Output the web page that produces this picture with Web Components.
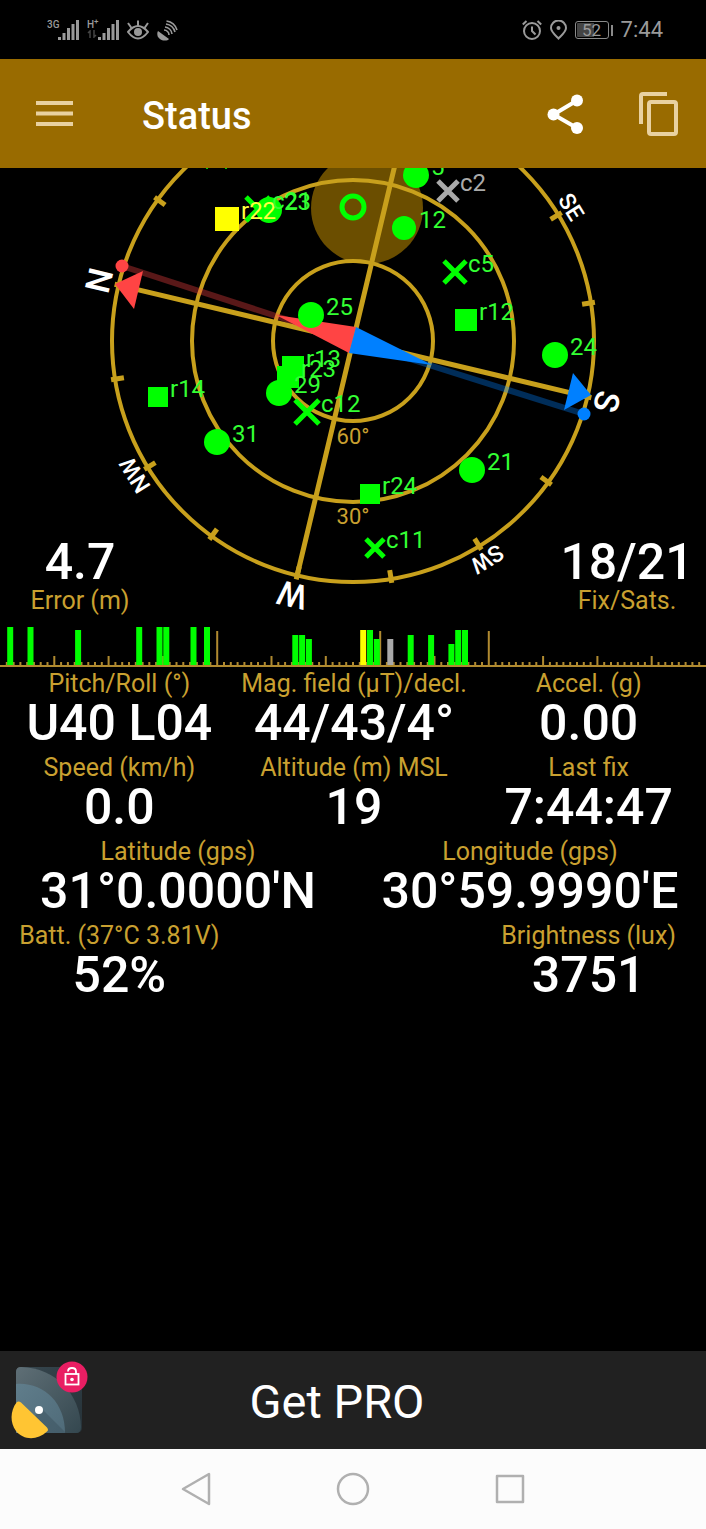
<!DOCTYPE html>
<html lang="en">
<head>
<meta charset="utf-8">
<meta name="viewport" content="width=device-width, initial-scale=1">
<title>Status</title>
<style>
  body {
    margin: 0;
    background: #000;
    color: #fff;
    font-family: Roboto, "Liberation Sans", sans-serif;
    --gold: #c8a01c;
    --gold-text: #c9a030;
    --bar: #996b00;
  }
</style>
</head>
<body>
<gps-status-app></gps-status-app>

<script>
// Small helper so every component builds its shadow root the same way
class BaseElement extends HTMLElement {
  connectedCallback() {
    if (!this.shadowRoot) this.attachShadow({ mode: 'open' });
    this.shadowRoot.innerHTML = this.render();
  }
}

class StatusBar extends BaseElement {
  render() {
    return `
      <style>
        :host {
          display: flex;
          justify-content: space-between;
          align-items: center;
          height: 59px;
          padding: 1px 43px 0 47px;
          box-sizing: border-box;
          color: #9a9a9a;
        }
        .group { display: flex; align-items: center; gap: 8px; }
        .signal { display: flex; height: 20px; }
        .net { font-size: 10px; line-height: 10px; font-weight: 500; width: 11px; white-space: nowrap; }
        .clock { font-size: 22px; line-height: 24px; }
        .battery { display: flex; align-items: center; gap: 2px; }
        .cell {
          width: 34px; height: 18px; box-sizing: border-box;
          border: 1px solid #8a8a8a; border-radius: 3px;
          background: linear-gradient(90deg, #444 0 17px, #000 17px) content-box;
          padding: 1px;
          font-size: 17px; line-height: 14px; text-align: center;
        }
        .cap { width: 2px; height: 11px; background: #8a8a8a; }
        svg { display: block; }
      </style>
      <div class="group">
        <div class="signal">
          <span class="net">3G</span>
          <svg width="21" height="20" fill="currentColor"><path d="M0 17h3v3H0zM4.500 13h3v7h-3zM9 8h3v12H9zM13.500 4h3v16h-3zM18 0h3v20h-3z"/></svg>
        </div>
        <div class="signal">
          <span class="net">H<sup style="line-height:0;font-size:8px">+</sup>
            <svg width="10" height="8" fill="none" stroke="#444" stroke-width="1.500"><path d="M1 3l2-2v7M7 0v7l2-2"/></svg>
          </span>
          <svg width="21" height="20" fill="currentColor"><path d="M0 17h3v3H0zM4.500 13h3v7h-3zM9 8h3v12H9zM13.500 4h3v16h-3zM18 0h3v20h-3z"/></svg>
        </div>
        <svg width="22" height="20" viewBox="0 0 22 20" fill="none" stroke="currentColor" stroke-width="2">
          <path d="M1 12Q11 0 21 12Q11 25 1 12z"/><circle cx="11" cy="12" r="4" fill="currentColor" stroke="none"/>
          <path d="M11 6V.5M4.500 8L1 3M17.500 8L21 3"/>
        </svg>
        <svg width="21" height="21" viewBox="0 0 21 21" fill="none" stroke="currentColor" stroke-width="1.600">
          <path d="M1 11C-1 14 1 20.500 8 20.500c2 0 3-.5 4-1.500z" fill="currentColor" stroke="none"/>
          <path d="M7 10a5 5 0 0 1 5 5M8 7a8 8 0 0 1 7 7M9 4a11 11 0 0 1 9 8M9.500 1A13 13 0 0 1 20 10"/>
        </svg>
      </div>
      <div class="group">
        <svg width="20" height="20" viewBox="0 0 20 20" fill="none" stroke="currentColor" stroke-width="2">
          <circle cx="10" cy="11" r="8"/><path d="M10 6.500V11l3.500 3.500M.8 4.500L4.500 1M19.200 4.500L15.500 1"/>
        </svg>
        <svg width="17" height="20" viewBox="0 0 17 20" fill="none" stroke="currentColor" stroke-width="2">
          <path d="M8.500 18.500C4 14 1 11.500 1 8a7.500 7.500 0 0 1 15 0c0 3.500-3 6-7.500 10.500z"/><circle cx="8.500" cy="8" r="2" fill="currentColor" stroke="none"/>
        </svg>
        <div class="battery"><div class="cell">52</div><div class="cap"></div></div>
        <span class="clock">7:44</span>
      </div>
    `;
  }
}
customElements.define('status-bar', StatusBar);

class AppBar extends BaseElement {
  render() {
    return `
      <style>
        :host {
          display: flex;
          align-items: center;
          height: 109px;
          padding: 0 25px 0 34px;
          box-sizing: border-box;
          background: var(--bar);
        }
        button { border: 0; padding: 0; background: none; color: #e9d1a0; display: block; }
        button svg { display: block; }
        h1 { flex: 1; margin: 0 0 0 66px; padding-top: 4px; font-size: 38px; line-height: 44px; font-weight: 500; }
        .share { color: #fff; margin-right: 53px; }
      </style>
      <button aria-label="Menu">
        <svg width="42" height="32" fill="currentColor"><path d="M2 3h37v4H2zM2 13.500h37v4H2zM2 24h37v4H2z"/></svg>
      </button>
      <h1><slot></slot></h1>
      <button class="share" aria-label="Share">
        <svg width="42" height="42" viewBox="0 0 42 42" fill="currentColor">
          <path d="M33 7.500L9.500 21.500 33 35" fill="none" stroke="currentColor" stroke-width="4"/>
          <circle cx="33" cy="7.500" r="6"/><circle cx="9.500" cy="21.500" r="6"/><circle cx="33" cy="35" r="6"/>
        </svg>
      </button>
      <button aria-label="Copy">
        <svg width="42" height="46" viewBox="0 0 42 46" fill="none" stroke="currentColor" stroke-width="4">
          <path d="M2 33V5q0-2 2-2h24"/><rect x="10" y="11" width="27" height="32" rx="2"/>
        </svg>
      </button>
    `;
  }
}
customElements.define('app-bar', AppBar);

// type: circle (gps), square (glonass), cross (beidou)
const SATS = [
  { type: 'square', x: 227, y: 219, r: 12, label: 'r22', color: '#ff0', text: '#ffff40' },
  { type: 'circle', x: 269, y: 210, r: 13, label: '23' },
  { type: 'cross', x: 258, y: 209, r: 12, label: 'c21' },
  { type: 'circle', x: 311, y: 315, r: 13, label: '25' },
  { type: 'cross', x: 448, y: 191, r: 10, label: 'c2', color: '#aaa', text: '#aaa' },
  { type: 'circle', x: 416, y: 175, r: 13, label: '5' },
  { type: 'circle', x: 404, y: 228, r: 12, label: '12' },
  { type: 'cross', x: 455, y: 272, r: 11, label: 'c5' },
  { type: 'square', x: 466, y: 320, r: 11, label: 'r12' },
  { type: 'circle', x: 555, y: 355, r: 13, label: '24' },
  { type: 'square', x: 293, y: 367, r: 11, label: 'r13' },
  { type: 'square', x: 288, y: 377, r: 11, label: 'r23' },
  { type: 'circle', x: 279, y: 393, r: 13, label: '29' },
  { type: 'cross', x: 307, y: 412, r: 12, label: 'c12' },
  { type: 'circle', x: 217, y: 442, r: 13, label: '31' },
  { type: 'square', x: 158, y: 397, r: 10, label: 'r14' },
  { type: 'circle', x: 472, y: 470, r: 13, label: '21' },
  { type: 'square', x: 370, y: 494, r: 10, label: 'r24' },
  { type: 'cross', x: 375, y: 548, r: 9, label: 'c11' }
];

class SkyView extends BaseElement {
  constructor() {
    super();
    this._cx = 353;
    this._cy = 341;
    this._heading = -76.6; // screen angle of north
  }

  _ticks() {
    let out = '';
    for (let i = 0; i < 16; i++) {
      out += `<path d="M0-232V-245" transform="rotate(${this._heading + i * 22.5})"/>`;
    }
    return out;
  }

  _letters() {
    return ['N', '', 'E', 'SE', 'S', 'SW', 'W', 'NW'].map((name, i) => {
      const size = name.length > 1 ? 23 : 34;
      const radius = name.length > 1 ? 248 : 249;
      return name ? `<text y="${-radius}" font-size="${size}" transform="rotate(${this._heading + i * 45})">${name}</text>` : '';
    }).join('');
  }

  _sat({ type, x, y, r, color = '#0f0' }) {
    if (type === 'circle') return `<circle cx="${x}" cy="${y}" r="${r}" fill="${color}"/>`;
    if (type === 'square') return `<rect x="${x - r}" y="${y - r}" width="${2 * r}" height="${2 * r}" fill="${color}"/>`;
    return `<path d="M${x - r} ${y - r}l${2 * r} ${2 * r}m0 ${-2 * r}l${-2 * r} ${2 * r}" stroke="${color}" stroke-width="5"/>`;
  }

  _satLabel({ x, y, r, type, label, text = '#33ff33' }) {
    const dx = type === 'circle' ? 15 : r + 2;
    return `<text x="${x + dx}" y="${y}" fill="${text}">${label}</text>`;
  }

  render() {
    return `
      <style>
        :host { display: grid; }
        svg { grid-area: 1 / 1; display: block; width: 100%; overflow: hidden; }
        .corners {
          grid-area: 1 / 1;
          align-self: end;
          display: flex;
          justify-content: space-between;
          padding: 0 0 11px 1px;
        }
        .corners ::slotted(*) { width: 158px; }
      </style>
      <svg viewBox="0 168 706 458" font-family="Roboto, sans-serif">
        <circle cx="367" cy="208" r="56" fill="#6b4e00"/>
        <g fill="none" stroke="var(--gold)" stroke-width="4" transform="translate(${this._cx} ${this._cy})">
          <circle r="80"/><circle r="161"/><circle r="241"/>
          <g stroke-width="5">
            <path d="M0-241V241M-241 0H241" transform="rotate(${this._heading})"/>
            ${this._ticks()}
          </g>
        </g>
        <g fill="#fff" font-weight="500" text-anchor="middle" transform="translate(${this._cx} ${this._cy})">
          ${this._letters()}
        </g>
        <g fill="#c9a030" font-size="22" text-anchor="middle">
          <text x="353" y="444">60°</text><text x="353" y="524">30°</text>
        </g>
        <path d="M122 266L353 341" stroke="#ff4444" stroke-opacity=".35" stroke-width="6"/>
        <path d="M584 414L353 341" stroke="#0080ff" stroke-opacity=".35" stroke-width="6"/>
        <path d="M276 315L356 327 349 353z" fill="#ff4444"/>
        <path d="M432 365L356 327 349 353z" fill="#0080ff"/>
        <circle cx="122" cy="266" r="6.500" fill="#ff4444"/><circle cx="584" cy="414" r="6.500" fill="#0080ff"/>
        <path d="M115 284l28-13-9 38z" fill="#ff4444"/>
        <path d="M591 395l-18-22-9 37z" fill="#0080ff"/>
        <circle cx="353" cy="207" r="11" fill="none" stroke="#0f0" stroke-width="5"/>
        ${SATS.map(this._sat).join('')}
        <path d="M206 168h2v1h-2zM225 168h2v1h-2z" fill="#0c0"/>
        <g font-size="24">${SATS.map(this._satLabel).join('')}</g>
      </svg>
      <div class="corners"><slot></slot></div>
    `;
  }
}
customElements.define('sky-view', SkyView);

// slot = position on the scale, each slot is 1/104 of the width
const SIGNALS = [
  [1, 39], [4, 39], [11, 36], [20, 39], [23, 39], [24, 39], [28, 39], [30, 39],
  [43, 31], [44, 31], [45, 27],
  [53, 36, '#ff0'], [54, 36], [55, 27], [57, 27, '#aaa'],
  [60, 31], [63, 31], [66, 22], [67, 36], [68, 36]
];

class SignalBars extends BaseElement {
  render() {
    const step = 706 / 104;
    let ticks = '';
    for (let i = 1; i < 104; i++) {
      const h = [32, 56, 72].includes(i) ? 35 : i % 8 === 0 ? 10 : 4;
      ticks += `M${(i * step).toFixed(1)} 40v${-h}`;
    }
    const bars = SIGNALS.map(([pos, h, color = '#0f0']) =>
      `<rect x="${((pos + 0.5) * step - 3).toFixed(1)}" y="${40 - h}" width="6" height="${h}" fill="${color}"/>`).join('');
    return `
      <style>
        :host { display: block; }
        svg { display: block; width: 100%; }
      </style>
      <svg viewBox="0 0 706 42">
        <path d="${ticks}" stroke="#b08a30" stroke-width="2"/>
        ${bars}
        <path d="M0 40H706" stroke="#b08a30" stroke-width="2"/>
      </svg>
    `;
  }
}
customElements.define('signal-bars', SignalBars);

// <value-readout label="Speed (km/h)">0.0</value-readout>
// add the "flip" attribute to put the label under the value
class ValueReadout extends BaseElement {
  render() {
    return `
      <style>
        :host { display: flex; flex-direction: column; text-align: center; white-space: nowrap; }
        :host([flip]) { flex-direction: column-reverse; }
        .label { font-size: 25px; line-height: 28px; color: var(--gold-text); }
        .value { font-size: 50px; line-height: 50px; font-weight: 500; color: #fff; }
      </style>
      <div class="label">${this.getAttribute('label')}</div>
      <div class="value"><slot></slot></div>
    `;
  }
}
customElements.define('value-readout', ValueReadout);

class ProBanner extends BaseElement {
  render() {
    return `
      <style>
        :host { display: block; background: #212121; }
        button {
          display: grid;
          grid-template-columns: 90px 1fr 122px;
          align-items: center;
          width: 100%;
          height: 98px;
          border: 0;
          padding: 0;
          background: none;
          color: #fff;
          font: 400 47px/56px Roboto, sans-serif;
          text-align: center;
        }
        span { padding-top: 4px; }
        svg { display: block; }
      </style>
      <button>
        <svg width="90" height="98" viewBox="0 0 90 98">
          <defs>
            <linearGradient id="back" x1="0" y1="0" x2="1" y2="1"><stop offset="0" stop-color="#37474f"/><stop offset="1" stop-color="#263238"/></linearGradient>
            <linearGradient id="mid" x1="0" y1="0" x2="1" y2="1"><stop offset="0" stop-color="#5f6f76"/><stop offset="1" stop-color="#34474f"/></linearGradient>
            <linearGradient id="front" x1="0" y1="0" x2="1" y2="1"><stop offset="0" stop-color="#607d8b"/><stop offset="1" stop-color="#4f6b79"/></linearGradient>
          </defs>
          <rect x="16" y="16" width="66" height="66" rx="5" fill="url(#back)"/>
          <path d="M16 21q0-5 5-5c35 1 59 27 60 60q0 6-5 6H16z" fill="url(#mid)"/>
          <path d="M16 33c27-2 49 18 49 49H16z" fill="url(#front)"/>
          <path d="M41 57l24 24v1H46L35 65z" fill="#3c525d" opacity=".5"/>
          <path d="M16.500 51.500q2-2 4.500 0L47 76.500q2 2.500 0 4C37 90 23 89 16 80c-6-8-6-20 .5-28.500z" fill="#ffc533"/>
          <circle cx="39" cy="59" r="4" fill="#fff"/>
          <circle cx="72" cy="26" r="15.500" fill="#e91e63"/>
          <g fill="none" stroke="#fff" stroke-width="1.800"><rect x="65.500" y="23" width="13" height="10.500"/><path d="M68 20.500q0-3.500 4-3.500t4 3.500V23"/></g>
          <circle cx="72" cy="28.500" r="1.800" fill="#fff"/>
        </svg>
        <span><slot></slot></span>
      </button>
    `;
  }
}
customElements.define('pro-banner', ProBanner);

class NavBar extends BaseElement {
  render() {
    return `
      <style>
        :host {
          display: flex;
          justify-content: center;
          align-items: center;
          gap: 121px;
          height: 80px;
          background: #fcfcfc;
        }
        button { border: 0; padding: 0; background: none; color: #b0b0b0; }
        svg { display: block; fill: none; stroke: currentColor; stroke-width: 2.5; stroke-linejoin: round; }
      </style>
      <button aria-label="Back"><svg width="36" height="36"><path d="M31 3v30L5 18z"/></svg></button>
      <button aria-label="Home"><svg width="36" height="36"><circle cx="18" cy="18" r="15"/></svg></button>
      <button aria-label="Recent apps"><svg width="36" height="36"><path d="M5 5h26v26H5z"/></svg></button>
    `;
  }
}
customElements.define('nav-bar', NavBar);

class GpsStatusApp extends BaseElement {
  render() {
    return `
      <style>
        :host { display: flex; flex-direction: column; min-height: 100vh; }
        main { flex: 1; }
        .readouts { display: grid; gap: 6px; padding: 2px 0 0 2px; }
        .row { display: grid; grid-auto-flow: column; grid-auto-columns: 1fr; }
      </style>
      <status-bar></status-bar>
      <app-bar>Status</app-bar>
      <main>
        <sky-view>
          <value-readout flip label="Error (m)">4.7</value-readout>
          <value-readout flip label="Fix/Sats.">18/21</value-readout>
        </sky-view>
        <signal-bars></signal-bars>
        <div class="readouts">
          <div class="row">
            <value-readout label="Pitch/Roll (°)">U40 L04</value-readout>
            <value-readout label="Mag. field (µT)/decl.">44/43/4°</value-readout>
            <value-readout label="Accel. (g)">0.00</value-readout>
          </div>
          <div class="row">
            <value-readout label="Speed (km/h)">0.0</value-readout>
            <value-readout label="Altitude (m) MSL">19</value-readout>
            <value-readout label="Last fix">7:44:47</value-readout>
          </div>
          <div class="row">
            <value-readout label="Latitude (gps)">31°0.0000'N</value-readout>
            <value-readout label="Longitude (gps)">30°59.9990'E</value-readout>
          </div>
          <div class="row">
            <value-readout label="Batt. (37°C 3.81V)">52%</value-readout>
            <span></span>
            <value-readout label="Brightness (lux)">3751</value-readout>
          </div>
        </div>
      </main>
      <pro-banner>Get PRO</pro-banner>
      <nav-bar></nav-bar>
    `;
  }
}
customElements.define('gps-status-app', GpsStatusApp);
</script>
</body>
</html>
